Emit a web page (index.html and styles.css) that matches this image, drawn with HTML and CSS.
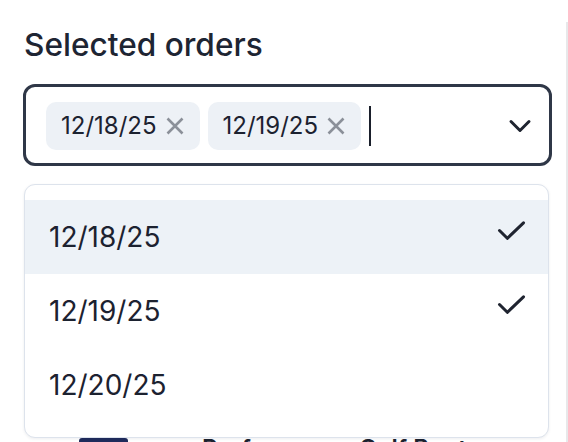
FILE: index.html
```html
<!DOCTYPE html>
<html lang="en">
<head>
<meta charset="utf-8">
<title>Selected orders</title>
<link rel="stylesheet" href="styles.css">
</head>
<body>
<div class="sidebar">
  <div class="field">
    <label class="field-label">Selected orders</label>
    <div class="control">
      <span class="tag">
        <span class="tag-text">12/18/25</span>
        <svg class="tag-x" width="18" height="18" viewBox="0 0 18 18"><path d="M1.5 1.5L16.5 16.5M16.5 1.5L1.5 16.5"/></svg>
      </span>
      <span class="tag">
        <span class="tag-text">12/19/25</span>
        <svg class="tag-x" width="18" height="18" viewBox="0 0 18 18"><path d="M1.5 1.5L16.5 16.5M16.5 1.5L1.5 16.5"/></svg>
      </span>
      <span class="cursor"></span>
      <svg class="chevron" width="24" height="16" viewBox="0 0 24 16"><path d="M3 3.5L12 12.5L21 3.5"/></svg>
    </div>
    <div class="menu">
      <div class="option is-active">
        <span>12/18/25</span>
        <svg class="check" width="29" height="21" viewBox="0 0 29 21"><path d="M2.5 10.5L10.3 18.3L26.5 2.8"/></svg>
      </div>
      <div class="option">
        <span>12/19/25</span>
        <svg class="check" width="29" height="21" viewBox="0 0 29 21"><path d="M2.5 10.5L10.3 18.3L26.5 2.8"/></svg>
      </div>
      <div class="option">
        <span>12/20/25</span>
      </div>
    </div>
  </div>
  <div class="products">
    <div class="product">
      <div class="thumb"></div>
      <div class="product-name">Performance Golf Boot</div>
    </div>
  </div>
</div>
</body>
</html>
```
FILE: styles.css
```css
html, body {
  margin: 0;
  padding: 0;
  background: #ffffff;
}
body {
  font-family: Inter, "Noto Sans", sans-serif;
  color: #1c2230;
  height: 442px;
  overflow: hidden;
}
.sidebar {
  box-sizing: border-box;
  width: 568px;
  height: 420px;
  margin-top: 22px;
  padding-left: 23px;
  border-right: 2px solid #e8e8ea;
}
.field {
  position: relative;
  width: 529px;
  padding-top: 3px;
}
.field-label {
  display: block;
  font-size: 31.6px;
  line-height: 40px;
  font-weight: 500;
  color: #1e2533;
  padding-left: 1px;
}
.control {
  box-sizing: border-box;
  margin-top: 19px;
  height: 82px;
  border: 3px solid #2f3747;
  border-radius: 12px;
  display: flex;
  align-items: center;
  gap: 8px;
  padding: 0 17px 0 20px;
}
.tag {
  display: flex;
  align-items: center;
  gap: 9px;
  height: 48px;
  padding: 0 16px 0 15px;
  border-radius: 10px;
  background: #edf1f6;
  font-size: 24px;
  line-height: 1;
  color: #1c2230;
  margin-top: 1px;
}
.tag-x {
  fill: none;
  stroke: #8b9099;
  stroke-width: 2.6;
}
.cursor {
  width: 2px;
  height: 40px;
  background: #1a1f2b;
  margin-top: 2px;
}
.chevron {
  margin-left: auto;
  fill: none;
  stroke: #1f2430;
  stroke-width: 3;
  stroke-linecap: round;
  stroke-linejoin: round;
  margin-top: 1px;
}
.menu {
  position: absolute;
  z-index: 2;
  left: 1px;
  top: calc(100% + 18px);
  box-sizing: border-box;
  width: 525px;
  padding: 15px 0;
  background: #ffffff;
  border: 1.5px solid #dde3ec;
  border-radius: 11px;
  box-shadow: 0 1px 3px rgba(30, 40, 60, 0.08);
}
.option {
  height: 74px;
  display: flex;
  align-items: center;
  padding: 0 22px 0 24px;
  font-size: 28px;
  line-height: 1;
  color: #1c2230;
}
.option.is-active {
  background: #edf2f7;
}
.check {
  margin-left: auto;
  align-self: flex-start;
  margin-top: 20px;
  fill: none;
  stroke: #1f2430;
  stroke-width: 3;
  stroke-linecap: round;
  stroke-linejoin: round;
}
.products {
  margin-top: 272px;
  padding-left: 56px;
}
.product {
  display: flex;
  align-items: flex-start;
  gap: 74px;
}
.thumb {
  width: 49px;
  height: 60px;
  background: #1f2b5c;
  border-radius: 3px;
}
.product-name {
  font-size: 24px;
  line-height: 1;
  font-weight: 600;
  margin-top: -1px;
}
```
